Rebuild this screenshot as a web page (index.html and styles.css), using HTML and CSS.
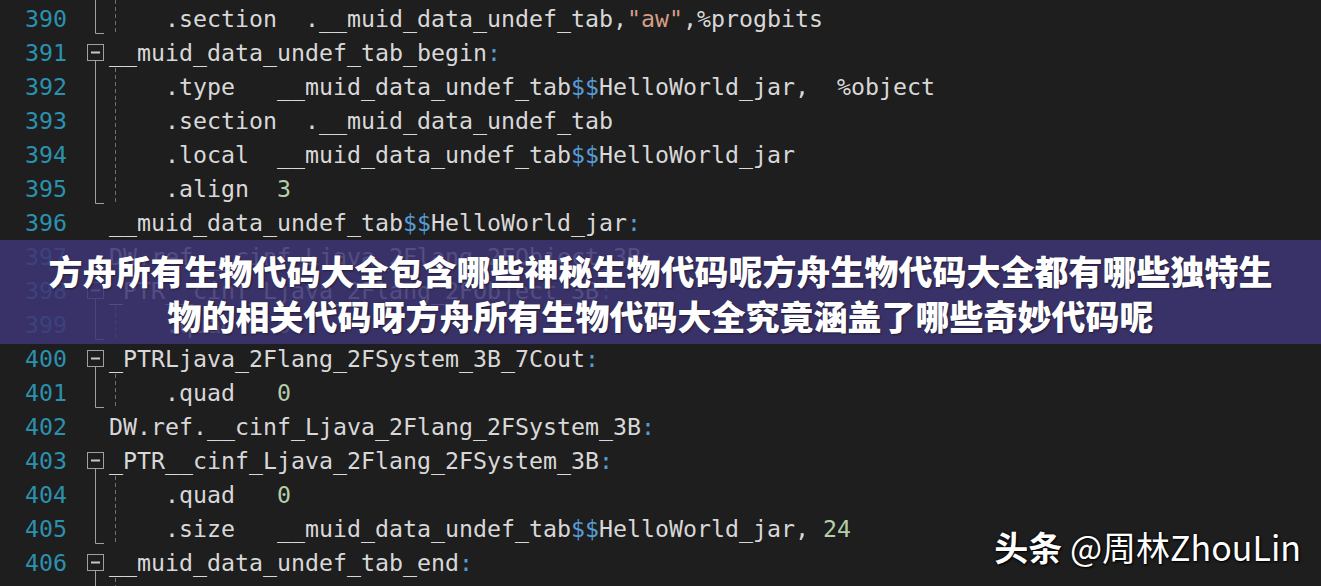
FILE: index.html
```html
<!DOCTYPE html>
<html lang="zh-CN">
<head>
<meta charset="utf-8">
<title>方舟所有生物代码大全</title>
<link rel="stylesheet" href="styles.css">
</head>
<body>
<svg class="defs" width="0" height="0" aria-hidden="true">
  <symbol id="f-box" viewBox="0 0 29 34">
    <rect x="7.5" y="10.5" width="16" height="16" fill="none" stroke="#a0a0a0"/>
    <path d="M11 18.5H20" stroke="#c8c8c8" stroke-width="2"/>
    <path d="M15.5 26.5V34" stroke="#a0a0a0"/>
  </symbol>
  <symbol id="f-mid" viewBox="0 0 29 34">
    <path d="M15.5 0V34" stroke="#a0a0a0"/>
  </symbol>
  <symbol id="f-end" viewBox="0 0 29 34">
    <path d="M15.5 0V33.5H24" fill="none" stroke="#a0a0a0"/>
  </symbol>
</svg>

<main class="editor">
  <div class="row"><span class="ln">390</span><span class="fold"><svg><use href="#f-end"/></svg></span><span class="code in">    .section  .__muid_data_undef_tab,<span class="str">"aw"</span>,%progbits</span></div>
  <div class="row"><span class="ln">391</span><span class="fold"><svg><use href="#f-box"/></svg></span><span class="code">__muid_data_undef_tab_begin<span class="op">:</span></span></div>
  <div class="row"><span class="ln">392</span><span class="fold"><svg><use href="#f-mid"/></svg></span><span class="code in">    .type   __muid_data_undef_tab<span class="op">$$</span>HelloWorld_jar,  %object</span></div>
  <div class="row"><span class="ln">393</span><span class="fold"><svg><use href="#f-mid"/></svg></span><span class="code in">    .section  .__muid_data_undef_tab</span></div>
  <div class="row"><span class="ln">394</span><span class="fold"><svg><use href="#f-mid"/></svg></span><span class="code in">    .local  __muid_data_undef_tab<span class="op">$$</span>HelloWorld_jar</span></div>
  <div class="row"><span class="ln">395</span><span class="fold"><svg><use href="#f-end"/></svg></span><span class="code in">    .align  <span class="num">3</span></span></div>
  <div class="row"><span class="ln">396</span><span class="fold"></span><span class="code">__muid_data_undef_tab<span class="op">$$</span>HelloWorld_jar<span class="op">:</span></span></div>
  <div class="row"><span class="ln">397</span><span class="fold"></span><span class="code">DW.ref.__cinf_Ljava_2Flang_2FObject_3B<span class="op">:</span></span></div>
  <div class="row"><span class="ln">398</span><span class="fold"><svg><use href="#f-box"/></svg></span><span class="code">_PTR__cinf_Ljava_2Flang_2FObject_3B<span class="op">:</span></span></div>
  <div class="row"><span class="ln">399</span><span class="fold"><svg><use href="#f-end"/></svg></span><span class="code in">    .quad   <span class="num">0</span></span></div>
  <div class="row"><span class="ln">400</span><span class="fold"><svg><use href="#f-box"/></svg></span><span class="code">_PTRLjava_2Flang_2FSystem_3B_7Cout<span class="op">:</span></span></div>
  <div class="row"><span class="ln">401</span><span class="fold"><svg><use href="#f-end"/></svg></span><span class="code in">    .quad   <span class="num">0</span></span></div>
  <div class="row"><span class="ln">402</span><span class="fold"></span><span class="code">DW.ref.__cinf_Ljava_2Flang_2FSystem_3B<span class="op">:</span></span></div>
  <div class="row"><span class="ln">403</span><span class="fold"><svg><use href="#f-box"/></svg></span><span class="code">_PTR__cinf_Ljava_2Flang_2FSystem_3B<span class="op">:</span></span></div>
  <div class="row"><span class="ln">404</span><span class="fold"><svg><use href="#f-mid"/></svg></span><span class="code in">    .quad   <span class="num">0</span></span></div>
  <div class="row"><span class="ln">405</span><span class="fold"><svg><use href="#f-end"/></svg></span><span class="code in">    .size   __muid_data_undef_tab<span class="op">$$</span>HelloWorld_jar, <span class="num">24</span></span></div>
  <div class="row"><span class="ln">406</span><span class="fold"><svg><use href="#f-box"/></svg></span><span class="code">__muid_data_undef_tab_end<span class="op">:</span></span></div>
  <div class="row"><span class="ln">407</span><span class="fold"><svg><use href="#f-mid"/></svg></span><span class="code in">    .quad   <span class="num">0</span></span></div>
</main>

<div class="banner">
  <p class="title">方舟所有生物代码大全包含哪些神秘生物代码呢方舟生物代码大全都有哪些独特生物的相关代码呀方舟所有生物代码大全究竟涵盖了哪些奇妙代码呢</p>
</div>

<div class="wm"><b>头条</b> @周林ZhouLin</div>
</body>
</html>
```

FILE: styles.css
```css
html, body {
  margin: 0;
  padding: 0;
  height: 100%;
  overflow: hidden;
  background: #1e1e1e;
}

.defs {
  position: absolute;
  width: 0;
  height: 0;
}

.editor {
  display: flex;
  flex-direction: column;
  font-family: "DejaVu Sans Mono", "Liberation Mono", monospace;
  font-size: 23.25px;
  color: #d8d8d8;
}

.row {
  display: grid;
  grid-template-columns: 80px 29px 1fr;
  height: 34px;
  flex: none;
}

.ln,
.code {
  padding-top: 3px;
  line-height: 31px;
  white-space: pre;
}

.ln {
  padding-left: 25px;
  color: #2b91af;
}

.fold svg {
  display: block;
  width: 29px;
  height: 34px;
}

.code.in {
  background-image: repeating-linear-gradient(to bottom, #707070 0 4px, transparent 4px 7px);
  background-size: 1px 100%;
  background-position: 6px 0;
  background-repeat: no-repeat;
}

.str { color: #d69d85; }
.op { color: #569cd6; }
.num { color: #b5cea8; }

.banner {
  position: absolute;
  top: 240px;
  left: 0;
  width: 100%;
  height: 104px;
  box-sizing: border-box;
  padding-top: 8px;
  background: rgba(62, 54, 116, 0.86);
  display: flex;
  justify-content: center;
}

.title {
  margin: 0;
  max-width: 1240px;
  text-align: center;
  font-family: "Noto Sans CJK SC", sans-serif;
  font-weight: 900;
  font-size: 34px;
  line-height: 45px;
  color: #ffffff;
  text-shadow: 1px 1px 2px rgba(0, 0, 0, 0.45);
}

.wm {
  position: absolute;
  right: 20px;
  top: 526px;
  font-family: "Noto Sans CJK SC", sans-serif;
  font-size: 34px;
  line-height: 42px;
  color: #ffffff;
  white-space: nowrap;
  text-shadow: 1px 1px 2px #000, 0 0 3px rgba(0, 0, 0, 0.8);
}

.wm b {
  font-weight: 700;
}
```
